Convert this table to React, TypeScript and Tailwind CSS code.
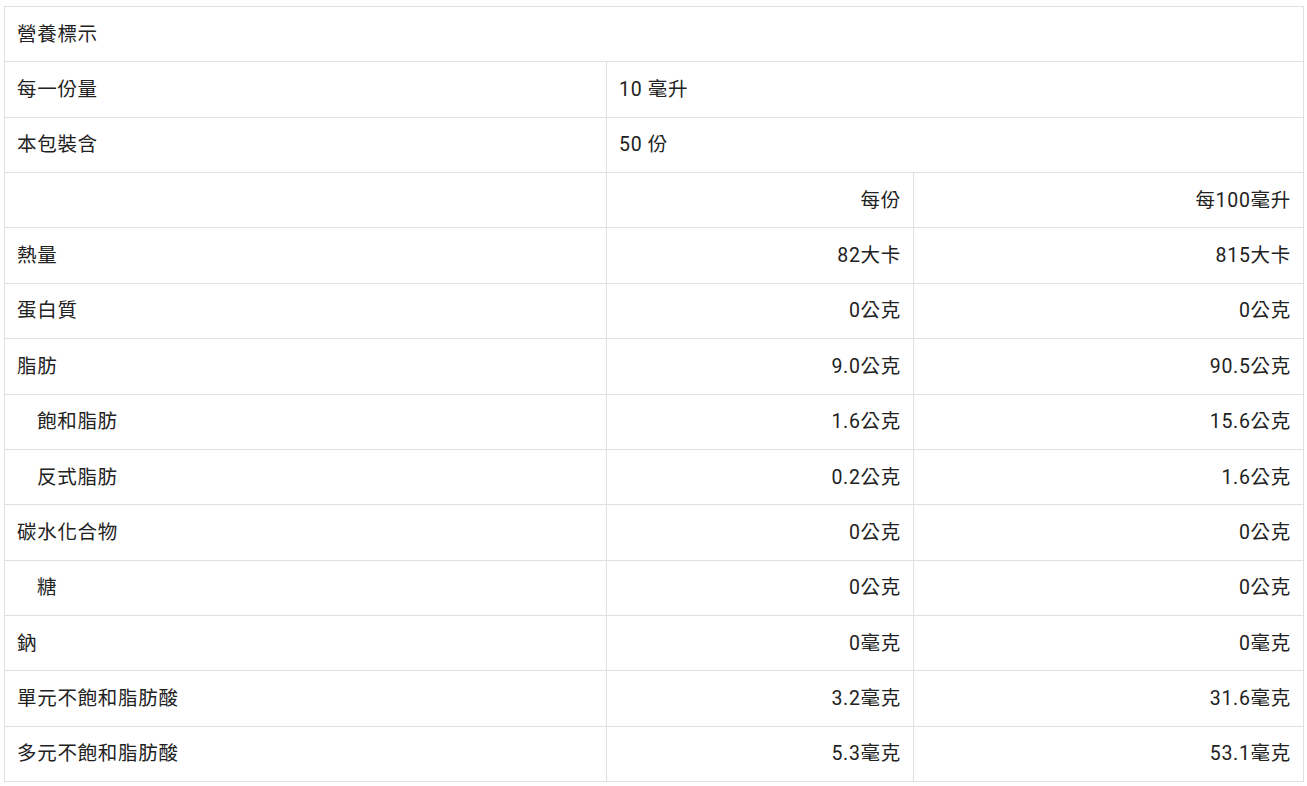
import React from "react";

type Row = { label: string; indent?: boolean; a: string; b: string };

const rows: Row[] = [
  { label: "熱量", a: "82大卡", b: "815大卡" },
  { label: "蛋白質", a: "0公克", b: "0公克" },
  { label: "脂肪", a: "9.0公克", b: "90.5公克" },
  { label: "飽和脂肪", indent: true, a: "1.6公克", b: "15.6公克" },
  { label: "反式脂肪", indent: true, a: "0.2公克", b: "1.6公克" },
  { label: "碳水化合物", a: "0公克", b: "0公克" },
  { label: "糖", indent: true, a: "0公克", b: "0公克" },
  { label: "鈉", a: "0毫克", b: "0毫克" },
  { label: "單元不飽和脂肪酸", a: "3.2毫克", b: "31.6毫克" },
  { label: "多元不飽和脂肪酸", a: "5.3毫克", b: "53.1毫克" },
];

const cell = "border border-[#e0e0e0] h-[55.36px] px-[12px] pt-[13px] pb-[12px] leading-[28px] align-middle";

export default function App() {
  return (
    <div
      className="bg-white w-[1307px] h-[786px] pl-[4px] pr-[3px] pt-[6px] text-[#222222] text-[19.5px] tracking-[0.7px]"
      style={{ fontFamily: 'Roboto, "Noto Sans CJK TC", sans-serif' }}
    >
      <table className="w-full table-fixed border-collapse">
        <colgroup>
          <col className="w-[602px]" />
          <col className="w-[307px]" />
          <col />
        </colgroup>
        <tbody>
          <tr>
            <td className={cell} colSpan={3}>營養標示</td>
          </tr>
          <tr>
            <td className={cell}>每一份量</td>
            <td className={cell} colSpan={2}>10 毫升</td>
          </tr>
          <tr>
            <td className={cell}>本包裝含</td>
            <td className={cell} colSpan={2}>50 份</td>
          </tr>
          <tr>
            <td className={cell}></td>
            <td className={cell + " text-right"}>每份</td>
            <td className={cell + " text-right"}>每100毫升</td>
          </tr>
          {rows.map((r) => (
            <tr key={r.label}>
              <td className={cell + (r.indent ? " pl-[32px]" : "")}>{r.label}</td>
              <td className={cell + " text-right"}>{r.a}</td>
              <td className={cell + " text-right"}>{r.b}</td>
            </tr>
          ))}
        </tbody>
      </table>
    </div>
  );
}
